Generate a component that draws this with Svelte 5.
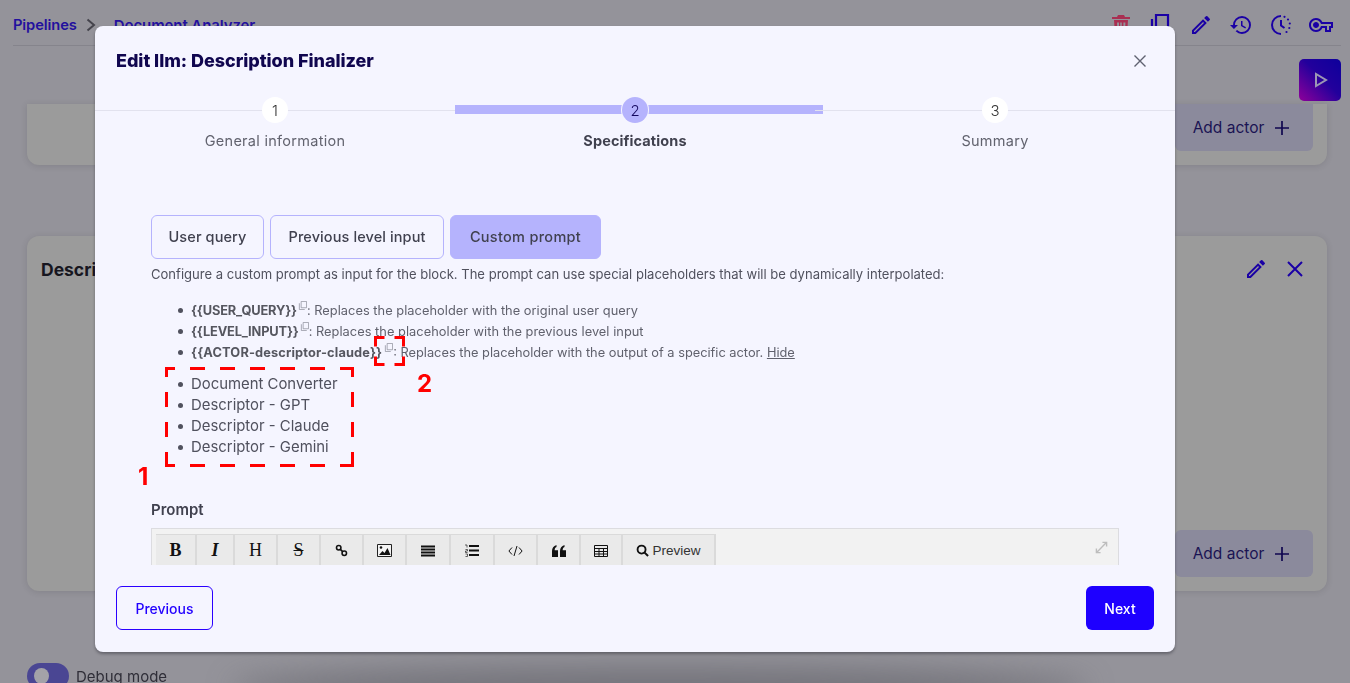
<script>
  const steps = [
    { n: 1, label: 'General information' },
    { n: 2, label: 'Specifications', active: true },
    { n: 3, label: 'Summary' }
  ];
  const actors = ['Document Converter', 'Descriptor - GPT', 'Descriptor - Claude', 'Descriptor - Gemini'];
</script>

<div class="page">
  <header class="topbar">
    <nav class="crumbs">
      <span class="crumb">Pipelines</span>
      <svg class="chev" viewBox="0 0 12 14" width="12" height="14"><path d="M2.5 1.5 9 7l-6.500 5.500" fill="none" stroke="#44434c" stroke-width="2"/></svg>
      <span class="crumb doc">Document Analyzer</span>
    </nav>
    <div class="tools">
      <svg class="ti trash" viewBox="0 0 24 24"><path d="M9 2h6l1 2h5v2H3V4h5zM5 7h14l-1 15H6zM8 9.500l.4 10.500h1.600V9.500zm3.200 0V20h1.600V9.500zm3.200 0V20h1.600l.4-10.500z" fill="#a92f52"/></svg>
      <svg class="ti" viewBox="0 0 24 24"><path d="M7 2h12v16H7zM3 6v16h12" fill="none" stroke="#1a00a5" stroke-width="2.200"/></svg>
      <svg class="ti" viewBox="0 0 24 24"><path d="M3 17.250V21h3.750L17.810 9.940l-3.750-3.750L3 17.250zM5.920 19H5v-.92l9.060-9.060.92.92L5.920 19zM20.710 7.040a1 1 0 0 0 0-1.410l-2.340-2.340a1 1 0 0 0-1.410 0l-1.830 1.830 3.750 3.750 1.830-1.830z" fill="#1a00a5"/></svg>
      <svg class="ti" viewBox="0 0 24 24"><path d="M13 3a9 9 0 0 0-9 9H1l3.890 3.890.07.14L9 12H6c0-3.870 3.130-7 7-7s7 3.130 7 7-3.130 7-7 7c-1.930 0-3.680-.79-4.940-2.060l-1.420 1.420A8.954 8.954 0 0 0 13 21a9 9 0 0 0 0-18zm-1 5v5l4.280 2.540.72-1.210-3.500-2.080V8H12z" fill="#1a00a5"/></svg>
      <svg class="ti" viewBox="0 0 24 24"><path d="M12 3a9 9 0 0 0 0 18M12 7v5.500l3.500 2.500" fill="none" stroke="#1a00a5" stroke-width="2"/><g fill="#1a00a5"><circle cx="15.500" cy="3.800" r="1.100"/><circle cx="19" cy="6.500" r="1.100"/><circle cx="20.800" cy="10.500" r="1.100"/><circle cx="20.300" cy="15" r="1.100"/><circle cx="17.500" cy="19" r="1.100"/></g></svg>
      <svg class="ti" viewBox="0 0 24 24"><path d="M22 19h-6v-4h-2.680c-1.140 2.420-3.600 4-6.320 4-3.860 0-7-3.140-7-7s3.140-7 7-7c2.720 0 5.170 1.580 6.320 4H24v6h-2v4zm-4-2h2v-4h2v-2H11.940l-.23-.67C11.010 8.340 9.110 7 7 7c-2.760 0-5 2.240-5 5s2.240 5 5 5c2.110 0 4.010-1.340 4.710-3.330l.23-.67H18v4zM7 15c-1.650 0-3-1.350-3-3s1.350-3 3-3 3 1.350 3 3-1.350 3-3 3z" fill="#1a00a5"/></svg>
    </div>
  </header>

  <div class="runrow">
    <button class="run" aria-label="Run">
      <svg viewBox="0 0 16 16" width="16" height="16"><path d="M3 2v12l10-6z" fill="none" stroke="#9c97b4" stroke-width="2"/></svg>
    </button>
  </div>

  <section class="card first">
    <button class="add">Add actor <svg viewBox="0 0 16 16" width="16" height="16"><path d="M8 1v14M1 8h14" stroke="#10064f" stroke-width="1.700"/></svg></button>
  </section>

  <section class="card second">
    <div class="cardhead">
      <strong>Description Finalizer</strong>
      <div class="cardtools">
        <svg class="ti" viewBox="0 0 24 24"><path d="M3 17.250V21h3.750L17.810 9.940l-3.750-3.750L3 17.250zM5.920 19H5v-.92l9.060-9.060.92.92L5.920 19zM20.710 7.040a1 1 0 0 0 0-1.410l-2.340-2.340a1 1 0 0 0-1.410 0l-1.830 1.830 3.750 3.750 1.830-1.830z" fill="#1a00a5"/></svg>
        <svg class="ti" viewBox="0 0 24 24"><path d="M5 5l14 14M19 5 5 19" stroke="#1a00a5" stroke-width="2"/></svg>
      </div>
    </div>
    <button class="add">Add actor <svg viewBox="0 0 16 16" width="16" height="16"><path d="M8 1v14M1 8h14" stroke="#10064f" stroke-width="1.700"/></svg></button>
  </section>

  <div class="debug"><span class="toggle"><i></i></span>Debug mode</div>
  <div class="floorshadow"></div>
</div>

<div class="backdrop">
  <div class="modal">
    <div class="mhead">
      <h2>Edit llm: Description Finalizer</h2>
      <svg class="close" viewBox="0 0 14 14" width="14" height="14"><path d="M1.500 1.500l11 11M12.500 1.500l-11 11" stroke="#5f6270" stroke-width="1.400"/></svg>
    </div>

    <div class="stepper">
      {#each steps as s}
        <div class="step" class:active={s.active}>
          {#if s.active}<span class="bar"></span>{/if}
          <span class="num">{s.n}</span>
          <span class="lab">{s.label}</span>
        </div>
      {/each}
    </div>

    <div class="body">
      <div class="tabs">
        <button class="tab">User query</button>
        <button class="tab">Previous level input</button>
        <button class="tab on">Custom prompt</button>
      </div>
      <p class="desc">Configure a custom prompt as input for the block. The prompt can use special placeholders that will be dynamically interpolated:</p>
      <ul class="ph">
        <li><b>&#123;&#123;USER_QUERY&#125;&#125;</b><svg class="cp" viewBox="0 0 10 10"><path d="M3.500.5h6v7h-6zM1.500 2.500v7h6" fill="none" stroke="#8a8c98" stroke-width=".8"/></svg>: Replaces the placeholder with the original user query</li>
        <li><b>&#123;&#123;LEVEL_INPUT&#125;&#125;</b><svg class="cp" viewBox="0 0 10 10"><path d="M3.500.5h6v7h-6zM1.500 2.500v7h6" fill="none" stroke="#8a8c98" stroke-width=".8"/></svg>: Replaces the placeholder with the previous level input</li>
        <li><b>&#123;&#123;ACTOR-descriptor-claude&#125;&#125;</b><svg class="cp wide" viewBox="0 0 10 10"><path d="M3.500.5h6v7h-6zM1.500 2.500v7h6" fill="none" stroke="#8a8c98" stroke-width=".8"/></svg>: Replaces the placeholder with the output of a specific actor. <u>Hide</u></li>
      </ul>
      <ul class="actors">
        {#each actors as a}<li>{a}</li>{/each}
      </ul>
      <div class="plabel">Prompt</div>
      <div class="editor">
        <div class="toolbar">
          <span class="tb w41 t bold">B</span>
          <span class="tb w38 t ital">I</span>
          <span class="tb w43 t">H</span>
          <span class="tb w43 t strike">S</span>
          <span class="tb w43"><svg viewBox="0 0 14 14" width="13" height="13"><circle cx="4" cy="4" r="2.400" fill="none" stroke="#111" stroke-width="1.700"/><circle cx="10" cy="10" r="2.400" fill="none" stroke="#111" stroke-width="1.700"/><path d="M5.500 5.500l3 3" stroke="#111" stroke-width="1.700"/></svg></span>
          <span class="tb w43"><svg viewBox="0 0 15 13" width="15" height="13"><path d="M.5.500h14v12H.5z" fill="#f4f4f4" stroke="#222"/><path d="M2 11l3.500-4 2 2 3-5 3 7z" fill="#111"/><circle cx="4" cy="3.500" r="1.300" fill="#111"/></svg></span>
          <span class="tb w44"><svg viewBox="0 0 14 12" width="14" height="12"><path d="M0 1.500h14M0 4.500h14M0 7.500h14M0 10.500h14" stroke="#111" stroke-width="2"/></svg></span>
          <span class="tb w44"><svg viewBox="0 0 14 13" width="14" height="13"><path d="M4 2h10M4 6.500h10M4 11h10" stroke="#111" stroke-width="2"/><path d="M0 1h2v2.500M.5 5.500h2v1.500H.500v1.500h2M.5 10h2v2.500h-2" fill="none" stroke="#222" stroke-width=".7"/></svg></span>
          <span class="tb w43"><svg viewBox="0 0 15 12" width="15" height="12"><path d="M4 2.500.9 6 4 9.500M11 2.500 14.100 6 11 9.500M9 1 6 11" fill="none" stroke="#111" stroke-width="1"/></svg></span>
          <span class="tb w43"><svg viewBox="0 0 14 12" width="14" height="12"><path d="M0 12V6c0-3 1.500-5 4.500-6v2C3 2.700 2.700 3.700 2.700 5.200H6V12zM8 12V6c0-3 1.500-5 4.500-6v2c-1.500.7-1.800 1.700-1.800 3.200H14V12z" fill="#111"/></svg></span>
          <span class="tb w42"><svg viewBox="0 0 14 12" width="14" height="12"><path d="M.5.500h13v11H.5zM.5 3.500h13M.5 6.500h13M.5 9h13M5 3.500v8M9.500 3.500v8" fill="none" stroke="#111"/></svg></span>
          <span class="tb w93 pv"><svg viewBox="0 0 14 14" width="13" height="13"><circle cx="6" cy="6" r="4.300" fill="none" stroke="#111" stroke-width="2"/><path d="M9 9l4 4" stroke="#111" stroke-width="2.200"/></svg>Preview</span>
        </div>
        <svg class="expand" viewBox="0 0 14 14" width="13" height="13"><path d="M8 1.500h4.500V6M12 2 2 12M1.500 8v4.500H6" fill="none" stroke="#bdbdbd" stroke-width="1.500"/></svg>
      </div>

      <svg class="mark box1" viewBox="0 0 189 100" width="189" height="100">
        <g fill="none" stroke="#f00" stroke-width="3" stroke-dasharray="15 15" stroke-dashoffset="5">
          <path d="M0 1.500H189"/><path d="M0 98.500H189"/><path d="M1.500 0V100"/><path d="M187.500 0V100"/>
        </g>
      </svg>
      <svg class="mark box2" viewBox="0 0 31 30" width="31" height="30">
        <g fill="none" stroke="#f00" stroke-width="3" stroke-dasharray="10.500 10">
          <path d="M0 1.500H31"/><path d="M0 28.500H31"/><path d="M1.500 0V30"/><path d="M29.500 0V30"/>
        </g>
      </svg>
      <span class="anno a1">1</span>
      <span class="anno a2">2</span>
    </div>

    <div class="mfoot">
      <button class="prev">Previous</button>
      <button class="next">Next</button>
    </div>
  </div>
</div>

<style>
  :global(html), :global(body) { margin: 0; height: 100%; overflow: hidden; }
  :global(body) { background: #94939a; font-family: Inter, "Open Sans", sans-serif; }
  * { box-sizing: border-box; }
  button { font-family: inherit; cursor: pointer; }

  .page { height: 683px; overflow: hidden; padding: 0 9px 0 27px; display: flex; flex-direction: column; position: relative; }
  .page > * { flex: none; }
  .topbar { margin: 0 0 0 -14px; width: 1328px; height: 46px; border-bottom: 1px solid #85848c; display: flex; align-items: flex-start; justify-content: space-between; padding-top: 15px; }
  .crumbs { display: flex; align-items: center; height: 20px; }
  .crumb { color: #23109e; font-size: 14.700px; font-weight: 600; letter-spacing: -.1px; }
  .doc { font-size: 15px; }
  .chev { margin: 0 17px 0 8px; }
  .tools { display: flex; gap: 16px; padding-right: 8px; margin-top: -2px; }
  .ti { width: 24px; height: 24px; display: block; }

  .runrow { display: flex; justify-content: flex-end; padding-top: 13px; height: 58px; }
  .run { width: 42px; height: 42px; border: 0; border-radius: 5px; background: linear-gradient(to top right, #8f009a 0%, #22009c 55%, #0d009c 100%); display: flex; align-items: center; justify-content: center; padding: 0 0 0 2px; }

  .card { width: 1300px; background: #9b9b9b; border-radius: 12px; position: relative; box-shadow: 0 1px 6px rgba(40,40,50,.15); }
  .first { height: 61px; margin-bottom: 71px; border-radius: 0 0 12px 12px; display: flex; justify-content: flex-end; padding-right: 14px; align-items: flex-start; }
  .second { height: 355px; padding: 0 14px 14px 14px; display: flex; flex-direction: column; justify-content: space-between; align-items: flex-end; }
  .add { width: 138px; height: 47px; background: #8b8a9c; border: 0; border-radius: 6px; color: #1a1353; font-size: 15.500px; display: flex; align-items: center; justify-content: center; gap: 10px; padding: 0 5px 0 0; }
  .first .add { height: 47px; border-radius: 0 0 6px 6px; }
  .cardhead { width: 100%; display: flex; justify-content: space-between; align-items: center; padding-top: 21px; }
  .cardhead strong { font-size: 17.500px; color: #17161f; }
  .cardtools { display: flex; gap: 15px; margin-right: 6px; }

  .debug { display: flex; align-items: flex-start; gap: 7px; font-size: 15px; color: #2f2e38; margin-top: 72px; height: 22px; line-height: 28px; position: relative; z-index: 1; }
  .toggle { width: 42px; height: 26px; background: #4a4693; border-radius: 13px; padding: 5px 7px; display: block; }
  .toggle i { display: block; width: 15px; height: 16px; border-radius: 50%; background: #a3a2a8; }
  .floorshadow { position: absolute; left: 230px; width: 860px; bottom: -24px; height: 40px; border-radius: 50%; background: rgba(90,90,96,.55); filter: blur(14px); }

  .backdrop { position: fixed; inset: 0; padding: 26px 0 0 95px; }
  .modal { width: 1080px; height: 626px; background: #f5f5ff; border-radius: 8px; box-shadow: 0 2px 3px rgba(30,30,40,.4); display: flex; flex-direction: column; overflow: hidden; color: #40414f; }
  .mhead { height: 70px; padding: 0 28px 0 21px; display: flex; align-items: center; justify-content: space-between; flex: none; }
  h2 { margin: -1px 0 0; font-size: 18px; font-weight: 800; color: #10064f; letter-spacing: -.05px; }

  .stepper { display: flex; flex: none; height: 70px; position: relative; }
  .stepper::before { content: ""; position: absolute; left: 0; right: 0; top: 14px; height: 1px; background: #e2e2ee; }
  .step { width: 360px; position: relative; display: flex; flex-direction: column; align-items: center; }
  .bar { position: absolute; left: 0; width: 368px; top: 9px; height: 9px; background: #b5b3fd; }
  .bar::after { content: ""; position: absolute; right: 0; width: 8px; top: 5px; height: 1px; background: #e2e2ee; }
  .num { position: relative; width: 26px; height: 26px; border-radius: 50%; background: #fff; font-size: 15px; display: flex; align-items: center; justify-content: center; color: #333; font-weight: 300; margin-top: 1px; }
  .active .num { background: #b5b3fd; color: #14085f; box-shadow: 0 0 0 1px #f5f5ff; }
  .lab { font-size: 14.500px; color: #62636f; margin-top: 9px; letter-spacing: .28px; }
  .active .lab { font-weight: 700; color: #40414f; letter-spacing: .1px; }

  .body { flex: 1; min-height: 0; overflow: hidden; padding: 49px 56px 0; position: relative; }
  .tabs { display: flex; gap: 6px; }
  .tab { height: 44px; background: #f5f5ff; border: 1px solid #b5b3fd; border-radius: 6px; padding: 0 0 2px; font-size: 14.500px; color: #40414f; letter-spacing: .1px; font-weight: 500; }
  .tab:nth-child(1) { width: 113px; }
  .tab:nth-child(2) { width: 174px; }
  .tab:nth-child(3) { width: 151px; letter-spacing: .3px; }
  .tab.on { background: #b5b3fd; }
  .desc { margin: 7px 0 0 0; padding-bottom: 1px; font-size: 13.060px; line-height: 16px; color: #50515e; white-space: nowrap; }
  ul { margin: 0; padding: 0 0 0 40px; list-style: none; }
  li { position: relative; }
  li::before { content: ""; position: absolute; left: -13px; top: 8px; width: 5px; height: 5px; border-radius: 50%; background: #50515e; }
  .ph { margin-top: 17px; font-size: 12.800px; line-height: 21px; color: #60616d; white-space: nowrap; }
  .ph b { color: #55565f; font-weight: 700; letter-spacing: -.15px; }
  .ph li:nth-child(3) b { letter-spacing: .15px; }
  .ph li:nth-child(-n+2) { letter-spacing: .04px; }
  .cp { width: 9px; height: 9px; vertical-align: 5px; margin-left: 1px; }
  .cp.wide { margin-left: 2px; }
  .actors { margin-top: 11px; font-size: 14.900px; line-height: 21px; color: #50515e; }
  .plabel { margin-top: 42px; font-size: 15px; font-weight: 600; color: #40414f; line-height: 20px; }
  .editor { margin-top: 8px; width: 968px; height: 60px; border: 1px solid #dcdce0; border-bottom: 0; background: #f2f2f2; padding: 5px 0 0 4px; position: relative; }
  .toolbar { display: flex; }
  .tb { height: 32px; background: #eaeaea; border-right: 2px solid #dadada; border-top: 1px solid #dadada; display: flex; align-items: center; justify-content: center; color: #111; flex: none; }
  .w38 { width: 38px; } .w41 { width: 41px; } .w42 { width: 42px; } .w43 { width: 43px; } .w44 { width: 44px; } .w93 { width: 93px; }
  .t { font-family: "Liberation Serif", serif; font-size: 18px; }
  .bold { font-weight: 700; }
  .ital { font-style: italic; font-weight: 700; }
  .strike { text-decoration: line-through; }
  .pv { font-family: "Liberation Sans", sans-serif; font-size: 13.500px; gap: 3px; color: #333; }
  .expand { position: absolute; right: 10px; top: 12px; }

  .mark { position: absolute; display: block; }
  .box1 { left: 70px; top: 201px; }
  .box2 { left: 279px; top: 170px; }
  .anno { position: absolute; color: #f00; font-weight: 700; font-size: 24px; line-height: 28px; }
  .a1 { left: 43px; top: 297px; }
  .a2 { left: 322px; top: 204px; }

  .mfoot { height: 87px; flex: none; padding: 21px 21px 0; display: flex; justify-content: space-between; align-items: flex-start; }
  .prev { width: 97px; height: 44px; border: 1px solid #2a00ff; border-radius: 6px; background: #f5f5ff; color: #2200ff; font-size: 14px; font-weight: 500; }
  .next { width: 68px; height: 44px; border: 0; border-radius: 6px; background: #1e00ff; color: #fff; font-size: 14px; font-weight: 500; }
</style>
